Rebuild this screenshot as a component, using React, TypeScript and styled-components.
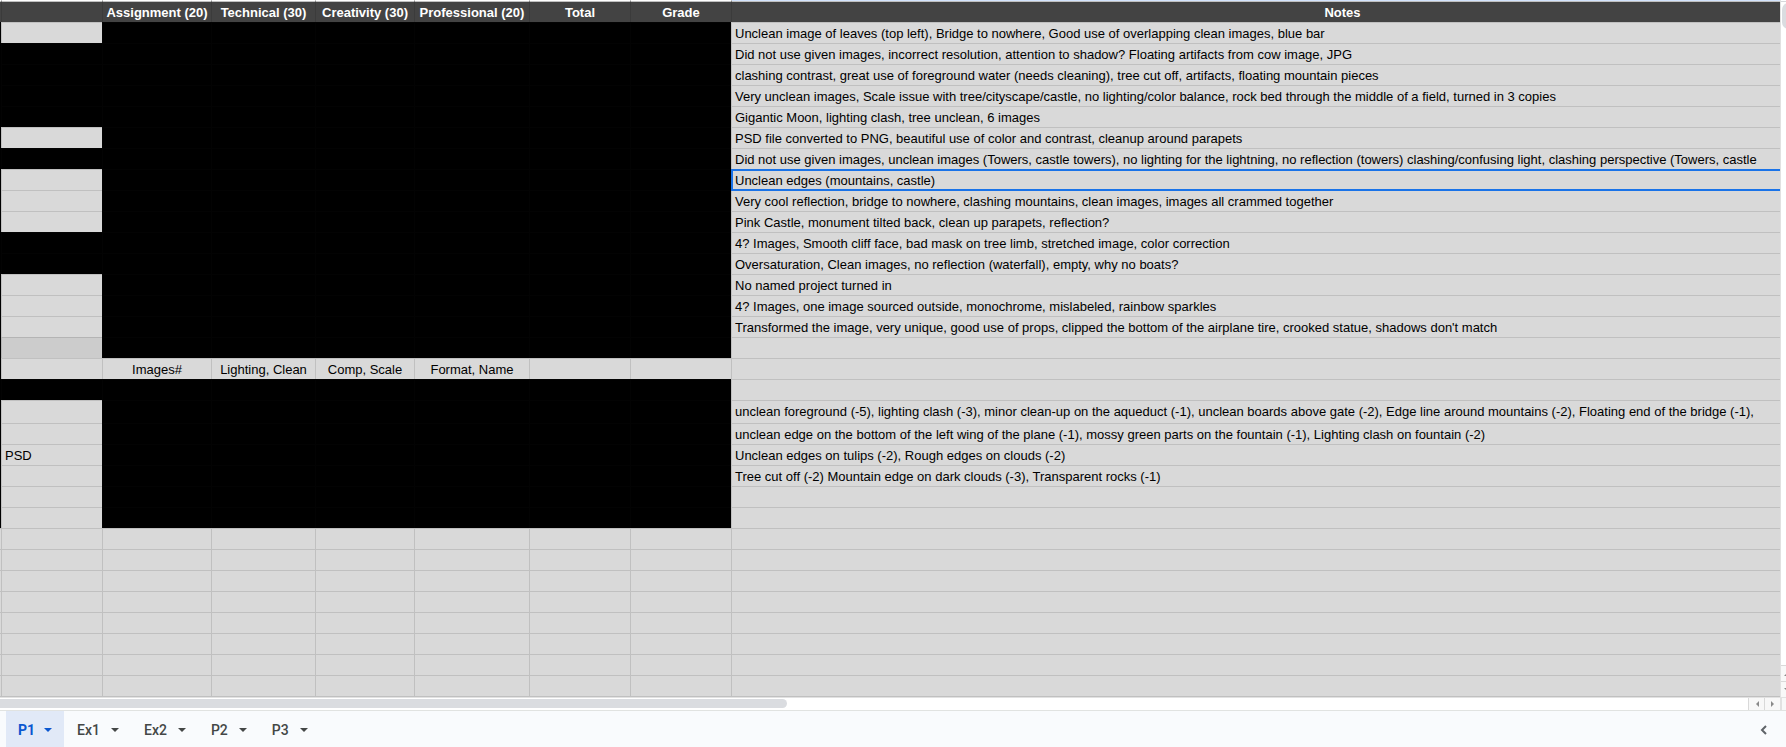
import React, { useState } from "react";
import styled, { createGlobalStyle, css } from "styled-components";

const GlobalStyle = createGlobalStyle`
  *, *::before, *::after { box-sizing: border-box; }
  body {
    margin: 0;
    background: #ffffff;
    font-family: "Liberation Sans", Arial, sans-serif;
    font-size: 13px;
    color: #000000;
  }
`;

const Page = styled.div`
  display: flex;
  flex-direction: column;
  height: 100vh;
  overflow: hidden;
`;

const Workspace = styled.main`
  display: flex;
  flex: none;
`;

const GridPane = styled.div`
  flex: 1;
  min-width: 0;
  overflow: hidden;
`;

const columnWidths = [1, 101, 109, 104, 99, 115, 101, 101, 1222];
const sheetWidth = columnWidths.reduce((sum, width) => sum + width, 0);

const Sheet = styled.table`
  width: ${sheetWidth}px;
  table-layout: fixed;
  border-collapse: separate;
  border-spacing: 0;
  border-bottom: 1px solid #c0c0c0;
`;

const Column = styled.col<{ $width: number }>`
  width: ${(p) => p.$width}px;
`;

const EdgeCell = styled.td<{ $active?: boolean }>`
  height: 1px;
  padding: 0;
  border-left: 1px solid #c0c0c0;
  background: ${(p) => (p.$active ? "#d3e3fd" : "#ffffff")};
`;

const HeaderCell = styled.th`
  height: 21px;
  padding: 2px 0 0;
  border-top: 1px solid #c0c0c0;
  border-left: 1px solid #3b3b3b;
  background: #434343;
  color: #ffffff;
  font-weight: bold;
  line-height: 18px;
  text-align: center;
  vertical-align: top;
  white-space: nowrap;
`;

type Tone = "light" | "shade" | "black";

const tones = {
  light: css`
    background: #d9d9d9;
    border-color: #c0c0c0;
  `,
  shade: css`
    background: #cccccc;
    border-color: #b4b4b4;
  `,
  black: css`
    background: #000000;
    border-color: #030303;
  `,
};

const Cell = styled.td<{ $tone: Tone; $center?: boolean; $selected?: boolean }>`
  position: relative;
  padding: 2px 0 0;
  border-style: solid;
  border-width: 1px 0 0 1px;
  line-height: 18px;
  text-align: ${(p) => (p.$center ? "center" : "left")};
  vertical-align: top;
  ${(p) => tones[p.$tone]}
  ${(p) =>
    p.$selected &&
    css`
      &::after {
        content: "";
        position: absolute;
        z-index: 1;
        inset: -1px 0 -1px -1px;
        border: 2px solid #1a73e8;
        pointer-events: none;
      }
    `}
`;

const Row = styled.tr<{ $tall?: boolean }>`
  height: ${(p) => (p.$tall ? 23 : 21)}px;
`;

const CellText = styled.div<{ $center?: boolean }>`
  padding-left: ${(p) => (p.$center ? 0 : 3)}px;
  overflow: hidden;
  white-space: nowrap;
`;

const VerticalBar = styled.div`
  display: flex;
  flex-direction: column;
  flex: none;
  width: 6px;
  overflow: hidden;
  border-left: 1px solid #e1e1e1;
`;

const VerticalTrack = styled.div`
  flex: 1;
  margin-top: 1px;
  padding: 1px 0 0 1px;
  border-top: 1px solid #d5d7da;
`;

const VerticalThumb = styled.div`
  width: 13px;
  height: 26px;
  border-radius: 7px;
  background: #dadce0;
`;

const HorizontalBar = styled.div`
  display: flex;
  flex: none;
  height: 13px;
  border-top: 1px solid #e1e1e1;
`;

const HorizontalTrack = styled.div`
  flex: 1;
  padding: 1px 0;
`;

const HorizontalThumb = styled.div`
  width: 45%;
  height: 9px;
  border-radius: 0 5px 5px 0;
  background: #dadce0;
`;

const ScrollButton = styled.button<{ $vertical?: boolean }>`
  display: flex;
  flex: none;
  align-items: center;
  justify-content: center;
  width: ${(p) => (p.$vertical ? 12 : 16)}px;
  height: ${(p) => (p.$vertical ? 16 : 12)}px;
  padding: 0;
  border: 0 solid #d9d9d9;
  border-width: ${(p) => (p.$vertical ? "1px 0 0 0" : "0 0 0 1px")};
  background: #f8f8f8;
  color: #8a8a8a;
`;

const Corner = styled.div`
  flex: none;
  width: 6px;
  border-left: 2px solid #e1e1e1;
  background: #f8f8f8;
`;

const Footer = styled.footer`
  display: flex;
  flex: 1;
  align-items: stretch;
  justify-content: space-between;
  padding-left: 6px;
  border-top: 1px solid #e1e3e1;
  background: #f9fbfd;
`;

const TabList = styled.nav`
  display: flex;
  gap: 1px;
`;

const Tab = styled.button<{ $active: boolean }>`
  display: flex;
  align-items: center;
  gap: ${(p) => (p.$active ? 9 : 11)}px;
  padding: 2px 12px 0;
  border: 0;
  background: ${(p) => (p.$active ? "#e1e9f7" : "transparent")};
  color: ${(p) => (p.$active ? "#0b57d0" : "#444746")};
  font: ${(p) => (p.$active ? 700 : 500)} 14px/20px Roboto, "Liberation Sans", sans-serif;
`;

const PanelButton = styled.button`
  display: flex;
  align-items: center;
  justify-content: center;
  width: 44px;
  padding: 2px 0 0;
  border: 0;
  background: transparent;
  color: #5f6368;
`;

const headings = [
  "",
  "Assignment (20)",
  "Technical (30)",
  "Creativity (30)",
  "Professional (20)",
  "Total",
  "Grade",
  "Notes",
];

interface SheetRow {
  first: Tone;
  label?: string;
  middle: "black" | "light";
  values?: string[];
  note?: string;
  tall?: boolean;
}

const graded = (first: Tone, note = "", extra: Partial<SheetRow> = {}): SheetRow => ({
  first,
  middle: "black",
  note,
  ...extra,
});

const rows: SheetRow[] = [
  graded("light", "Unclean image of leaves (top left), Bridge to nowhere, Good use of overlapping clean images, blue bar"),
  graded("black", "Did not use given images, incorrect resolution, attention to shadow? Floating artifacts from cow image, JPG"),
  graded("black", "clashing contrast, great use of foreground water (needs cleaning), tree cut off, artifacts, floating mountain pieces"),
  graded("black", "Very unclean images, Scale issue with tree/cityscape/castle, no lighting/color balance, rock bed through the middle of a field, turned in 3 copies"),
  graded("black", "Gigantic Moon, lighting clash, tree unclean, 6 images"),
  graded("light", "PSD file converted to PNG, beautiful use of color and contrast, cleanup around parapets"),
  graded("black", "Did not use given images, unclean images (Towers, castle towers), no lighting for the lightning, no reflection (towers) clashing/confusing light, clashing perspective (Towers, castle"),
  graded("light", "Unclean edges (mountains, castle)"),
  graded("light", "Very cool reflection, bridge to nowhere, clashing mountains, clean images, images all crammed together"),
  graded("light", "Pink Castle, monument tilted back, clean up parapets, reflection?"),
  graded("black", "4? Images, Smooth cliff face, bad mask on tree limb, stretched image, color correction"),
  graded("black", "Oversaturation, Clean images, no reflection (waterfall), empty, why no boats?"),
  graded("light", "No named project turned in"),
  graded("light", "4? Images, one image sourced outside, monochrome, mislabeled, rainbow sparkles"),
  graded("light", "Transformed the image, very unique, good use of props, clipped the bottom of the airplane tire, crooked statue, shadows don't match"),
  graded("shade"),
  { first: "light", middle: "light", values: ["Images#", "Lighting, Clean", "Comp, Scale", "Format, Name", "", ""] },
  graded("black"),
  graded(
    "light",
    "unclean foreground (-5), lighting clash (-3), minor clean-up on the aqueduct (-1), unclean boards above gate (-2), Edge line around mountains (-2), Floating end of the bridge (-1),",
    { tall: true }
  ),
  graded("light", "unclean edge on the bottom of the left wing of the plane (-1), mossy green parts on the fountain (-1), Lighting clash on fountain (-2)"),
  graded("light", "Unclean edges on tulips (-2), Rough edges on clouds (-2)", { label: "PSD" }),
  graded("light", "Tree cut off (-2) Mountain edge on dark clouds (-3), Transparent rocks (-1)"),
  graded("light"),
  graded("light"),
  ...Array.from({ length: 8 }, (): SheetRow => ({ first: "light", middle: "light" })),
];

const GRADED_ROWS = 24;
const SELECTED_ROW = 7;
const sheetTabs = ["P1", "Ex1", "Ex2", "P2", "P3"];

const GutterCell = styled.td<{ $dark?: boolean }>`
  padding: 0;
  border-top: 1px solid ${(p) => (p.$dark ? "#000000" : "#c0c0c0")};
  background: ${(p) => (p.$dark ? "#000000" : "#d9d9d9")};
`;

const HeaderGutter = styled.td`
  padding: 0;
  border-top: 1px solid #c0c0c0;
  background: #434343;
`;

const EdgeGutter = styled.td`
  height: 1px;
  padding: 0;
`;

const arrowPaths = {
  left: "M5 0v6L2 3z",
  right: "M1 0v6l3-3z",
  up: "M0 5h6L3 2z",
  down: "M0 1h6L3 4z",
};

function Arrow({ to }: { to: keyof typeof arrowPaths }) {
  return (
    <svg width="6" height="6" viewBox="0 0 6 6" fill="currentColor" aria-hidden="true">
      <path d={arrowPaths[to]} />
    </svg>
  );
}

export default function App() {
  const [activeTab, setActiveTab] = useState("P1");

  return (
    <Page>
      <GlobalStyle />
      <Workspace>
        <GridPane>
          <Sheet>
            <colgroup>
              {columnWidths.map((width, i) => (
                <Column key={i} $width={width} />
              ))}
            </colgroup>
            <thead>
              <tr aria-hidden="true">
                <EdgeGutter />
                {headings.map((_, i) => (
                  <EdgeCell key={i} $active={i === headings.length - 1} />
                ))}
              </tr>
              <tr>
                <HeaderGutter />
                {headings.map((heading, i) => (
                  <HeaderCell key={i} scope="col">
                    {heading}
                  </HeaderCell>
                ))}
              </tr>
            </thead>
            <tbody>
              {rows.map((row, r) => (
                <Row key={r} $tall={row.tall}>
                  <GutterCell $dark={r < GRADED_ROWS} />
                  <Cell $tone={row.first}>
                    <CellText>{row.label}</CellText>
                  </Cell>
                  {headings.slice(1, -1).map((heading, c) => (
                    <Cell key={heading} $tone={row.middle} $center>
                      <CellText $center>{row.values?.[c]}</CellText>
                    </Cell>
                  ))}
                  <Cell $tone="light" $selected={r === SELECTED_ROW}>
                    <CellText>{row.note}</CellText>
                  </Cell>
                </Row>
              ))}
            </tbody>
          </Sheet>
        </GridPane>
        <VerticalBar>
          <VerticalTrack>
            <VerticalThumb />
          </VerticalTrack>
          <ScrollButton $vertical aria-label="Scroll up">
            <Arrow to="up" />
          </ScrollButton>
          <ScrollButton $vertical aria-label="Scroll down">
            <Arrow to="down" />
          </ScrollButton>
        </VerticalBar>
      </Workspace>
      <HorizontalBar>
        <HorizontalTrack>
          <HorizontalThumb />
        </HorizontalTrack>
        <ScrollButton aria-label="Scroll left">
          <Arrow to="left" />
        </ScrollButton>
        <ScrollButton aria-label="Scroll right">
          <Arrow to="right" />
        </ScrollButton>
        <Corner />
      </HorizontalBar>
      <Footer>
        <TabList aria-label="Sheets">
          {sheetTabs.map((name) => (
            <Tab key={name} $active={name === activeTab} onClick={() => setActiveTab(name)}>
              {name}
              <svg width="8" height="4" viewBox="0 0 8 4" fill="currentColor" aria-hidden="true">
                <path d="M0 0h8L4 4z" />
              </svg>
            </Tab>
          ))}
        </TabList>
        <PanelButton aria-label="Show side panel">
          <svg width="8" height="12" viewBox="0 0 8 12" fill="none" stroke="currentColor" strokeWidth="2" aria-hidden="true">
            <path d="M6 2L2 6l4 4" />
          </svg>
        </PanelButton>
      </Footer>
    </Page>
  );
}
